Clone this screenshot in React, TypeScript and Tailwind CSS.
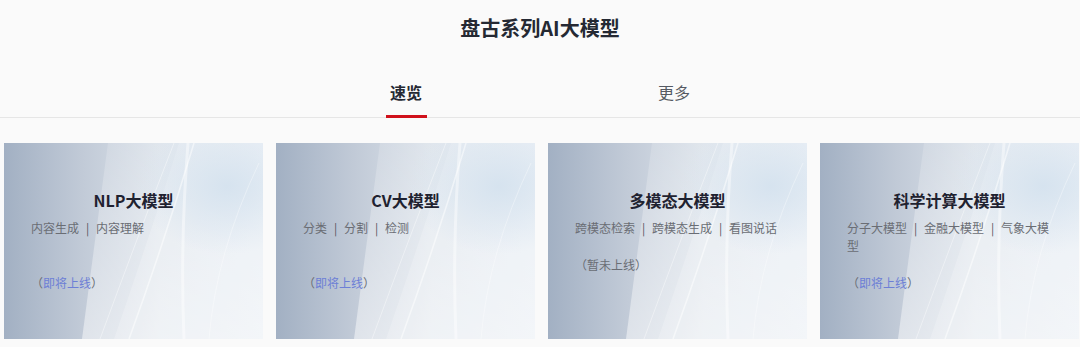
import React from "react"

const cjk = "font-['Noto_Sans_CJK_SC','Noto_Sans',sans-serif]"

type Model = {
  title: string
  tags: string[]
  status: string
  live: boolean
  spacer?: boolean
}

const models: Model[] = [
  { title: "NLP大模型", tags: ["内容生成", "内容理解"], status: "即将上线", live: true, spacer: true },
  { title: "CV大模型", tags: ["分类", "分割", "检测"], status: "即将上线", live: true, spacer: true },
  { title: "多模态大模型", tags: ["跨模态检索", "跨模态生成", "看图说话"], status: "暂未上线", live: false },
  { title: "科学计算大模型", tags: ["分子大模型", "金融大模型", "气象大模型"], status: "即将上线", live: true },
]

function CardBackdrop() {
  return (
    <svg
      className="absolute inset-0 h-full w-full"
      viewBox="0 0 259 196"
      preserveAspectRatio="none"
      aria-hidden
    >
      <defs>
        <linearGradient id="base" x1="0" y1="0" x2="1" y2="0">
          <stop offset="0" stopColor="#a2b0c3" />
          <stop offset="0.3" stopColor="#c1cad7" />
          <stop offset="0.6" stopColor="#dbe2ea" />
          <stop offset="1" stopColor="#e3eaf2" />
        </linearGradient>
        <radialGradient id="glow" cx="0.86" cy="0.22" r="0.35">
          <stop offset="0" stopColor="#d6e3ef" />
          <stop offset="1" stopColor="#d6e3ef" stopOpacity="0" />
        </radialGradient>
        <linearGradient id="sheen" x1="0" y1="1" x2="0" y2="0">
          <stop offset="0" stopColor="#ffffff" stopOpacity="0.8" />
          <stop offset="1" stopColor="#ffffff" stopOpacity="0.25" />
        </linearGradient>
      </defs>
      <rect width="259" height="196" fill="url(#base)" />
      <path d="M78 196 Q92 90 104 0 L259 0 L259 196 Z" fill="url(#sheen)" opacity="0.6" />
      <path d="M110 196 Q150 80 175 0 L259 0 L259 196 Z" fill="#ffffff" opacity="0.2" />
      <rect width="259" height="196" fill="url(#glow)" />
      <path d="M96 196 Q135 90 170 0" stroke="#ffffff" strokeWidth="1" fill="none" opacity="0.4" />
      <path d="M125 196 Q160 100 190 0" stroke="#ffffff" strokeWidth="1.6" fill="none" opacity="0.5" />
      <path d="M180 196 Q176 100 184 0" stroke="#ffffff" strokeWidth="3" fill="none" opacity="0.45" />
      <path d="M205 196 Q212 110 255 20" stroke="#ffffff" strokeWidth="1" fill="none" opacity="0.35" />
    </svg>
  )
}

function ModelCard({ model }: { model: Model }) {
  return (
    <div className="relative h-[196px] w-[259px] shrink-0 overflow-hidden">
      <CardBackdrop />
      <div className="relative px-[27px] pt-[45px]">
        <h3 className="text-center text-[16px] font-bold leading-[24px] text-[#1f2230]">
          {model.title}
        </h3>
        <p className="mt-[7px] text-[12px] leading-[18px] text-[#6a6d74]">
          {model.tags.map((tag, i) => (
            <React.Fragment key={tag}>
              {i > 0 && <span className="inline-block w-[17px] text-center text-[#55585f]">|</span>}
              {tag}
            </React.Fragment>
          ))}
        </p>
        {model.spacer && <div className="h-[18px]" />}
        <p className="mt-[19px] text-[12px] leading-[18px] text-[#6a6d74]">
          （
          <span className={model.live ? "text-[#6d7fd6]" : ""}>{model.status}</span>
          ）
        </p>
      </div>
    </div>
  )
}

export default function App() {
  return (
    <main className={`h-[347px] w-[1080px] overflow-hidden bg-[#fafafa] ${cjk}`}>
      <h1 className="pt-[14px] text-center text-[20px] font-bold leading-[28px] text-[#252933]">
        盘古系列AI大模型
      </h1>

      <div className="mt-[38px] flex justify-center border-b border-[#e6e6e6]">
        <div className="flex w-[268px] flex-col items-center">
          <span className="text-[16px] font-bold leading-[24px] text-[#252933]">速览</span>
          <div className="-mb-px mt-[11px] h-[3px] w-[41px] bg-[#d0111b]" />
        </div>
        <div className="flex w-[268px] flex-col items-center">
          <span className="text-[16px] leading-[24px] text-[#555a63]">更多</span>
        </div>
      </div>

      <div className="flex gap-[13px] pl-[4px] pt-[25px]">
        {models.map((m) => (
          <ModelCard key={m.title} model={m} />
        ))}
      </div>
    </main>
  )
}
